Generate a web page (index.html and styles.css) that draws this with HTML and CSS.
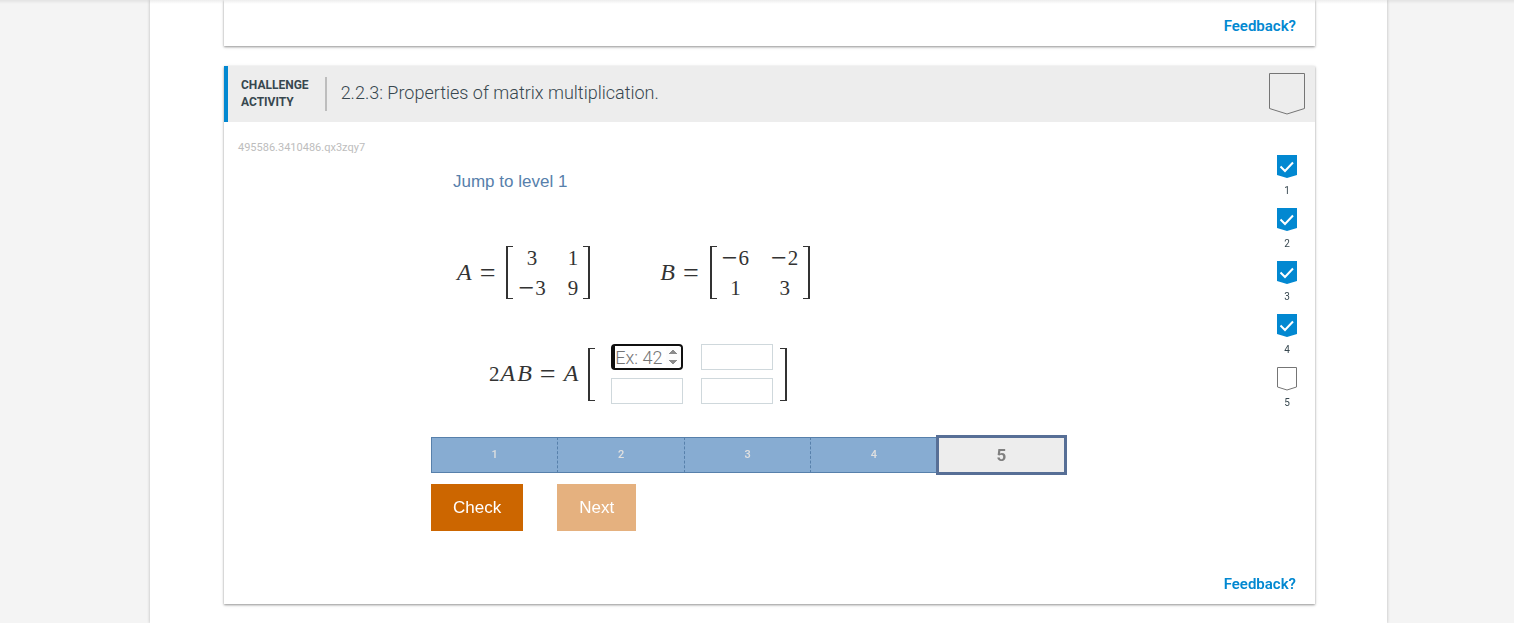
FILE: index.html
```html
<!DOCTYPE html>
<html lang="en">
<head>
    <meta charset="UTF-8">
    <meta name="viewport" content="width=device-width, initial-scale=1.0">
    <title>2.2.3: Properties of matrix multiplication</title>
    <link rel="stylesheet" href="styles.css">
</head>
<body>
    <div class="top-shadow"></div>
    <main class="page">
        <section class="card card-previous">
            <a href="#feedback" class="feedback">Feedback?</a>
        </section>

        <section class="card">
            <header class="card-header">
                <div class="activity-type">CHALLENGE<br>ACTIVITY</div>
                <h1 class="activity-title">2.2.3: Properties of matrix multiplication.</h1>
                <svg class="badge" width="38" height="44" viewBox="0 0 38 44" fill="none" stroke="#757575">
                    <path d="M1.5 1.5H36.5V36.5L19 42L1.5 36.5Z"/>
                </svg>
            </header>

            <div class="card-body">
                <div class="main-column">
                    <div class="activity-id">495586.3410486.qx3zqy7</div>
                    <form class="tool">
                        <button type="button" class="jump">Jump to level 1</button>

                        <div class="given">
                            <div class="equation">
                                <span><i>A</i><span class="op equals">=</span></span>
                                <div class="matrix">
                                    <span>3</span><span>1</span>
                                    <span><span class="op">−</span>3</span><span>9</span>
                                </div>
                            </div>
                            <div class="equation">
                                <span><i>B</i><span class="op equals">=</span></span>
                                <div class="matrix">
                                    <span><span class="op">−</span>6</span><span><span class="op">−</span>2</span>
                                    <span>1</span><span>3</span>
                                </div>
                            </div>
                        </div>

                        <div class="answer">
                            <span>2<i>A</i><i>B</i><span class="op equals">=</span><i>A</i></span>
                            <span class="bracket bracket-left"></span>
                            <div class="entries">
                                <input type="number" class="entry" placeholder="Ex: 42" aria-label="Row 1, column 1" autofocus>
                                <input type="number" class="entry" aria-label="Row 1, column 2">
                                <input type="number" class="entry" aria-label="Row 2, column 1">
                                <input type="number" class="entry" aria-label="Row 2, column 2">
                            </div>
                            <span class="bracket bracket-right"></span>
                        </div>

                        <ol class="levels">
                            <li>1</li>
                            <li>2</li>
                            <li>3</li>
                            <li>4</li>
                            <li class="current">5</li>
                        </ol>

                        <div class="buttons">
                            <button type="button" class="button">Check</button>
                            <button type="button" class="button" disabled>Next</button>
                        </div>
                    </form>
                </div>

                <ol class="progress">
                    <li>
                        <svg width="22" height="24" viewBox="0 0 22 24"><path fill="#0288d1" d="M1 0H21V20L11 23L1 20Z"/><path fill="none" stroke="#fff" stroke-width="2" d="M4.5 11.5L9 16L17 7.5"/></svg>
                        <span>1</span>
                    </li>
                    <li>
                        <svg width="22" height="24" viewBox="0 0 22 24"><path fill="#0288d1" d="M1 0H21V20L11 23L1 20Z"/><path fill="none" stroke="#fff" stroke-width="2" d="M4.5 11.5L9 16L17 7.5"/></svg>
                        <span>2</span>
                    </li>
                    <li>
                        <svg width="22" height="24" viewBox="0 0 22 24"><path fill="#0288d1" d="M1 0H21V20L11 23L1 20Z"/><path fill="none" stroke="#fff" stroke-width="2" d="M4.5 11.5L9 16L17 7.5"/></svg>
                        <span>3</span>
                    </li>
                    <li>
                        <svg width="22" height="24" viewBox="0 0 22 24"><path fill="#0288d1" d="M1 0H21V20L11 23L1 20Z"/><path fill="none" stroke="#fff" stroke-width="2" d="M4.5 11.5L9 16L17 7.5"/></svg>
                        <span>4</span>
                    </li>
                    <li>
                        <svg width="22" height="24" viewBox="0 0 22 24"><path fill="none" stroke="#757575" d="M1.5 .5H20.5V20L11 23L1.5 20Z"/></svg>
                        <span>5</span>
                    </li>
                </ol>
            </div>

            <a href="#feedback" class="feedback">Feedback?</a>
        </section>
    </main>
</body>
</html>
```

FILE: styles.css
```css
* {
    box-sizing: border-box;
}
body {
    margin: 0;
    min-height: 100vh;
    display: flex;
    background-color: #f4f4f4;
    font-family: Roboto, sans-serif;
    color: #37474f;
}
.top-shadow {
    position: absolute;
    top: 0;
    left: 0;
    right: 0;
    height: 4px;
    background: linear-gradient(rgba(0, 0, 0, 0.07), rgba(0, 0, 0, 0));
}
.page {
    flex: 1;
    margin: 0 127px 0 150px;
    padding: 0 72px 18px 74px;
    background: #ffffff;
    box-shadow: 0 0 3px rgba(0, 0, 0, 0.25);
}
.card {
    display: flex;
    flex-direction: column;
    margin-bottom: 20px;
    padding-bottom: 9px;
    background: #ffffff;
    box-shadow: 0 1px 2px rgba(0, 0, 0, 0.35), 0 1px 4px rgba(0, 0, 0, 0.12);
}
.card:last-child {
    margin-bottom: 0;
}
.card-previous {
    padding-top: 15px;
}
.feedback {
    align-self: flex-end;
    margin-right: 19px;
    font-size: 15px;
    line-height: 22px;
    font-weight: 600;
    color: #0288d1;
    text-decoration: none;
}
.card-header {
    display: flex;
    align-items: center;
    height: 56px;
    padding: 0 9px 0 13px;
    border-left: 4px solid #0288d1;
    background: #ededed;
}
.activity-type {
    padding-right: 16px;
    border-right: 2px solid #bdbdbd;
    font-size: 12px;
    line-height: 17px;
    font-weight: bold;
}
.activity-title {
    flex: 1;
    margin: 0;
    padding: 0 0 2px 14px;
    font-size: 18px;
    line-height: 24px;
    font-weight: 300;
}
.card-body {
    display: flex;
    padding: 16px 18px 0 14px;
}
.main-column {
    flex: 1;
}
.activity-id {
    font-size: 11px;
    line-height: 20px;
    color: #bdbdbd;
}
.tool {
    max-width: 635px;
    margin: 0 auto;
    padding-bottom: 42px;
    font-family: 'Liberation Sans', sans-serif;
}
.jump {
    display: block;
    margin: 12px 0 0;
    padding: 0 22px;
    border: none;
    background: none;
    font: 17px/24px 'Liberation Sans', sans-serif;
    color: #5780ab;
    cursor: pointer;
}

/* Math */
.given,
.answer {
    display: flex;
    align-items: center;
    font: 21px/30px 'Liberation Serif', serif;
    color: #333333;
}
.given {
    gap: 69px;
    margin-top: 52px;
    padding-left: 25px;
}
.given i,
.answer i {
    margin: 0 1px;
    font-size: 24px;
    line-height: 20px;
}
.answer {
    margin-top: 45px;
    padding-left: 58px;
}
.equation {
    display: flex;
    align-items: center;
}
.op {
    margin-right: 1px;
    font-size: 28px;
    line-height: 20px;
    vertical-align: -2px;
}
.equals {
    margin: 0 7px;
}
.matrix {
    display: grid;
    grid-template-columns: auto auto;
    grid-auto-rows: 30px;
    column-gap: 22px;
    justify-items: center;
    align-content: center;
    height: 53px;
    margin-left: 4px;
    padding: 0 10px;
    border: solid #333333;
    border-width: 0 2px;
    background:
        linear-gradient(#333333, #333333) left top / 5px 1px,
        linear-gradient(#333333, #333333) left bottom / 5px 1px,
        linear-gradient(#333333, #333333) right top / 5px 1px,
        linear-gradient(#333333, #333333) right bottom / 5px 1px;
    background-repeat: no-repeat;
}
.bracket {
    width: 7px;
    height: 53px;
    border: solid #333333;
}
.bracket-left {
    margin: 0 16px 0 9px;
    border-width: 1px 0 1px 2px;
}
.bracket-right {
    margin-left: 7px;
    border-width: 1px 2px 1px 0;
}
.entries {
    display: grid;
    grid-template-columns: 72px 72px;
    gap: 8px 18px;
}
.entry {
    width: 100%;
    height: 26px;
    padding: 0 4px;
    border: 1px solid #cfd8dc;
    background: #ffffff;
    font: 300 18px/22px Roboto, sans-serif;
    color: #37474f;
}
.entry::placeholder {
    color: #757575;
}
.entry:focus {
    padding: 0;
    border: 2px solid #101010;
    border-left-width: 4px;
    border-radius: 4px;
    outline: none;
}
.entry:focus::-webkit-inner-spin-button {
    opacity: 1;
}

/* Level bar */
.levels {
    display: flex;
    height: 36px;
    margin: 33px 0 0;
    padding: 0;
    list-style: none;
    font-family: Roboto, sans-serif;
}
.levels li {
    flex: 1;
    border: solid #5780ab;
    border-width: 1px 0;
    border-right: 1px dashed #5780ab;
    background: #87acd2;
    text-align: center;
    font-size: 11px;
    line-height: 34px;
    font-weight: 500;
    color: #e0e0e0;
}
.levels li:first-child {
    border-left: 1px solid #5780ab;
}
.levels .current {
    margin: -2px -1px -2px -2px;
    border: 3px solid #576f96;
    background: #ededed;
    font-size: 17px;
    font-weight: bold;
    color: #808080;
}
.buttons {
    display: flex;
    gap: 34px;
    margin-top: 11px;
}
.button {
    padding: 0 22px;
    border: none;
    background-color: #cc6600;
    font: 17px/47px 'Liberation Sans', sans-serif;
    color: #ffffff;
    cursor: pointer;
}
.button:disabled {
    background-color: #e5b17f;
    cursor: default;
}

/* Progress column */
.progress {
    display: flex;
    flex-direction: column;
    width: 38px;
    margin: 0;
    padding: 17px 0 0;
    list-style: none;
}
.progress li {
    display: flex;
    flex-direction: column;
    align-items: center;
    align-self: flex-end;
    width: 20px;
    height: 53px;
    font-size: 10px;
    line-height: 24px;
}
.progress svg {
    flex: none;
}
```
